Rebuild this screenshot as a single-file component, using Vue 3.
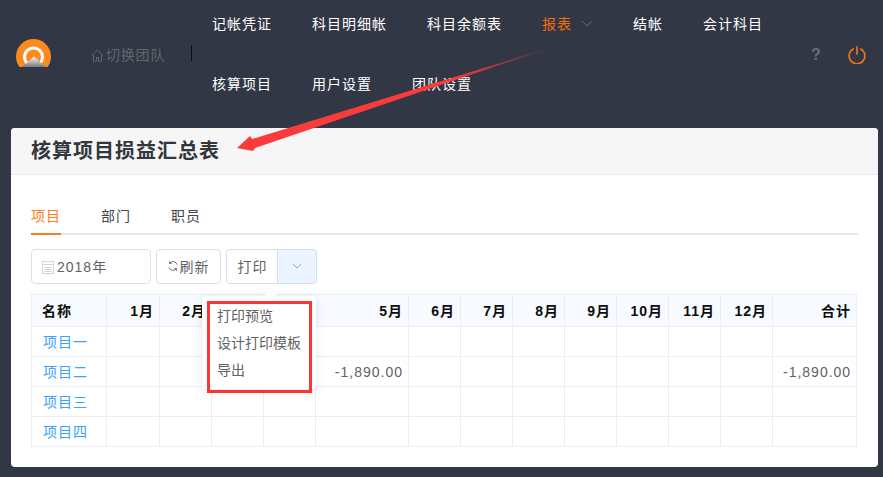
<script setup>
const topRow = ['记帐凭证', '科目明细帐', '科目余额表', '报表', '结帐', '会计科目', '核算项目', '用户设置', '团队设置']
const months = ['1月', '2月', '3月', '4月', '5月', '6月', '7月', '8月', '9月', '10月', '11月', '12月']
const rows = [
  { name: '项目一', m5: '', total: '' },
  { name: '项目二', m5: '-1,890.00', total: '-1,890.00' },
  { name: '项目三', m5: '', total: '' },
  { name: '项目四', m5: '', total: '' }
]
const cols = months.map((m, i) => (i === 4 ? 93 : i === 0 ? 53 : 52))
</script>

<template>
  <div class="page">
    <header class="topbar">
      <svg class="logo" width="36" height="30" viewBox="0 0 36 30">
        <defs>
          <linearGradient id="mt" x1="0" y1="0" x2="0" y2="1">
            <stop offset="0" stop-color="#f7f7f7" />
            <stop offset="1" stop-color="#777a82" />
          </linearGradient>
          <clipPath id="cut"><rect x="0" y="0" width="36" height="28" /></clipPath>
        </defs>
        <g clip-path="url(#cut)">
          <circle cx="17.5" cy="17.5" r="17.5" fill="#fb8a1f" />
          <circle cx="17.5" cy="18" r="9" fill="none" stroke="#fff" stroke-width="3" />
          <path d="M6 28 L18 17.5 L30 28 Z" fill="url(#mt)" />
        </g>
      </svg>
      <a class="team">
        <svg width="13" height="13" viewBox="0 0 13 13" fill="none" stroke="#62656d" stroke-width="1">
          <path d="M.8 6.500 6.500 1l5.700 5.500M2.500 5.500v6.800h3V8.500h2v3.800h3V5.500" />
        </svg>
        <span>切换团队</span>
      </a>
      <i class="divider"></i>
      <nav class="menu">
        <a v-for="item in topRow" :key="item" class="menu-item" :class="{ active: item === '报表' }">
          {{ item }}
          <svg v-if="item === '报表'" class="menu-caret" width="10" height="6" viewBox="0 0 10 6" fill="none" stroke="#6b6e76" stroke-width="1">
            <path d="M.5.5 5 5 9.500 .5" />
          </svg>
        </a>
      </nav>
      <div class="tools">
        <span class="help">?</span>
        <svg width="18" height="18" viewBox="0 0 18 18" fill="none" stroke="#e9741c" stroke-width="1.7" stroke-linecap="round">
          <path d="M5.200 2.900a7.900 7.900 0 1 0 7.600 0M9 .9v7" />
        </svg>
      </div>
    </header>

    <main class="card">
      <div class="card-head">核算项目损益汇总表</div>
      <div class="card-body">
        <div class="tabs">
          <a class="tab on">项目</a>
          <a class="tab">部门</a>
          <a class="tab">职员</a>
        </div>
        <div class="toolbar">
          <div class="date">
            <svg width="12" height="14" viewBox="0 0 12 14" fill="none" stroke="#d3d5da" stroke-width="1">
              <rect x=".5" y="1.500" width="11" height="12" />
              <path d="M.5 4.500h11M2.500 7.500h7M2.500 9.500h7M2.500 11.500h7" />
            </svg>
            <span>2018年</span>
          </div>
          <button class="btn refresh">
            <svg width="10" height="10" viewBox="0 0 10 10" fill="none" stroke="#73767d" stroke-width="1">
              <path d="M9 3.600A4.200 4.200 0 0 0 2 1.800M1 6.400A4.200 4.200 0 0 0 8 8.200" />
              <path d="M1.500 .3v2.200h2.200M8.500 9.700V7.500H6.300" />
            </svg>
            <span>刷新</span>
          </button>
          <div class="split">
            <button class="btn print">打印</button>
            <button class="btn more">
              <svg width="10" height="6" viewBox="0 0 10 6" fill="none" stroke="#6aaef5" stroke-width="1"><path d="M1 1l4 4 4-4" /></svg>
            </button>
          </div>
        </div>

        <div class="table-wrap">
          <table class="grid">
            <colgroup>
              <col style="width: 75px" />
              <col v-for="(w, i) in cols" :key="i" :style="{ width: w + 'px' }" />
              <col style="width: 84px" />
            </colgroup>
            <thead>
              <tr>
                <th class="left">名称</th>
                <th v-for="m in months" :key="m">{{ m }}</th>
                <th>合计</th>
              </tr>
            </thead>
            <tbody>
              <tr v-for="r in rows" :key="r.name">
                <td class="link">{{ r.name }}</td>
                <td v-for="(m, i) in months" :key="m">{{ i === 4 ? r.m5 : '' }}</td>
                <td>{{ r.total }}</td>
              </tr>
            </tbody>
          </table>

          <div class="popover">
            <i class="pointer"></i>
            <ul>
              <li>打印预览</li>
              <li>设计打印模板</li>
              <li>导出</li>
            </ul>
          </div>
          <div class="redbox"></div>
        </div>
      </div>
    </main>

    <svg class="annot" width="883" height="477" viewBox="0 0 883 477">
      <defs>
        <linearGradient id="fade" gradientUnits="userSpaceOnUse" x1="562" y1="44" x2="450" y2="80">
          <stop offset="0" stop-color="#f93b3b" stop-opacity="0" />
          <stop offset="1" stop-color="#f93b3b" />
        </linearGradient>
      </defs>
      <polygon points="237,148 250,136 252,139 562,44 255,148 253,151" fill="url(#fade)" />
    </svg>
  </div>
</template>

<style>
html, body { margin: 0; padding: 0; background: #323745; }
</style>

<style scoped>
.page {
  position: relative;
  width: 883px;
  height: 477px;
  overflow: hidden;
  background: #323745;
  font-family: "Liberation Sans", "Noto Sans CJK SC", sans-serif;
  font-size: 14px;
  letter-spacing: 1px;
  color: #606266;
}
.topbar {
  display: flex;
  align-items: flex-start;
  height: 128px;
  box-sizing: border-box;
  padding-left: 16px;
}
.logo { margin-top: 39px; flex: none; }
.team {
  display: flex;
  align-items: center;
  gap: 2px;
  flex: none;
  margin: 44px 0 0 39px;
  height: 22px;
  width: 100px;
  color: #62656d;
  white-space: nowrap;
  letter-spacing: .8px;
}
.team span { margin-top: -2px; }
.divider {
  flex: none;
  width: 1px;
  height: 16px;
  margin: 45px 0 0 0;
  background: #0c0d10;
}
.menu {
  display: flex;
  flex-wrap: wrap;
  width: 600px;
  flex: none;
}
.menu-item {
  display: flex;
  align-items: center;
  height: 60px;
  padding: 0 20px;
  line-height: 48px;
  color: #fff;
  white-space: nowrap;
  margin-top: -6px;
  margin-bottom: 6px;
}
.menu-item.active { color: #f06c0c; }
.menu-caret { margin: 0 1px 0 10px; }
.tools {
  display: flex;
  align-items: center;
  gap: 27px;
  margin: 46px 0 0 19px;
}
.help {
  font-weight: 700;
  font-size: 16px;
  color: #6b6e76;
  letter-spacing: 0;
}
.card {
  position: relative;
  margin: 0 5px 0 11px;
  height: 339px;
  background: #fff;
  border-radius: 4px;
  overflow: hidden;
}
.card-head {
  height: 47px;
  box-sizing: border-box;
  padding-left: 20px;
  background: #f6f6f7;
  border-bottom: 1px solid #e9ebf3;
  font-size: 20px;
  font-weight: 700;
  line-height: 47px;
  color: #33363c;
}
.card-body { padding: 0 20px; }
.tabs {
  display: flex;
  gap: 40px;
  height: 60px;
  box-sizing: border-box;
  padding-top: 30px;
  border-bottom: 2px solid #e4e7ed;
}
.tab {
  height: 30px;
  line-height: 22px;
  color: #41444b;
  box-sizing: border-box;
}
.tab.on {
  color: #f9801f;
  border-bottom: 2px solid #f9801f;
}
.toolbar {
  display: flex;
  gap: 5px;
  margin-top: 14px;
  height: 35px;
}
.date {
  display: flex;
  align-items: center;
  gap: 3px;
  width: 120px;
  box-sizing: border-box;
  padding-left: 10px;
  border: 1px solid #dcdfe6;
  border-radius: 4px;
}
.date span { margin-top: -2px; }
.btn {
  height: 35px;
  box-sizing: border-box;
  padding: 0 0 2px;
  background: #fff;
  border: 1px solid #dcdfe6;
  font: inherit;
  letter-spacing: 1px;
  color: #606266;
}
.refresh {
  display: flex;
  align-items: center;
  justify-content: center;
  gap: 2px;
  width: 65px;
  border-radius: 4px;
}
.split { display: flex; }
.print {
  width: 51px;
  padding-left: 1px;
  border-radius: 4px 0 0 4px;
  border-right: none;
}
.more {
  display: flex;
  align-items: center;
  justify-content: center;
  width: 40px;
  background: #ecf5ff;
  border-color: #c6e2ff;
  border-radius: 0 4px 4px 0;
}
.table-wrap {
  position: relative;
  margin-top: 10px;
}
.grid {
  table-layout: fixed;
  border-collapse: collapse;
  width: 825px;
}
.grid th, .grid td {
  border: 1px solid #ebeef5;
  padding: 0 5px 0 10px;
  text-align: right;
  white-space: nowrap;
  overflow: hidden;
  box-sizing: border-box;
}
.grid th {
  height: 32px;
  padding-bottom: 2px;
  background: #f7fbff;
  color: #0d0d0d;
  font-weight: 700;
}
.grid th.left { text-align: left; }
.grid td {
  height: 30px;
  color: #606266;
}
.grid td.link {
  text-align: left;
  color: #409eff;
  padding-left: 11px;
  padding-bottom: 2px;
}
.popover {
  position: absolute;
  left: 171px;
  top: 2px;
  width: 114px;
  height: 93px;
  box-sizing: border-box;
  background: #fff;
  border-radius: 4px;
  box-shadow: 0 2px 10px rgba(0, 0, 0, .1);
  letter-spacing: 0;
}
.pointer {
  position: absolute;
  left: 63px;
  top: -6px;
  width: 0;
  height: 0;
  border-left: 6px solid transparent;
  border-right: 6px solid transparent;
  border-bottom: 6px solid #fff;
}
.popover ul {
  list-style: none;
  margin: 0;
  padding: 7px 0 0 15px;
}
.popover li {
  height: 27px;
  line-height: 27px;
  color: #606266;
  white-space: nowrap;
}
.redbox {
  position: absolute;
  left: 176px;
  top: 7px;
  width: 105px;
  height: 92px;
  box-sizing: border-box;
  border: 3px solid #f93535;
}
.annot {
  position: absolute;
  left: 0;
  top: 0;
  pointer-events: none;
}
</style>
